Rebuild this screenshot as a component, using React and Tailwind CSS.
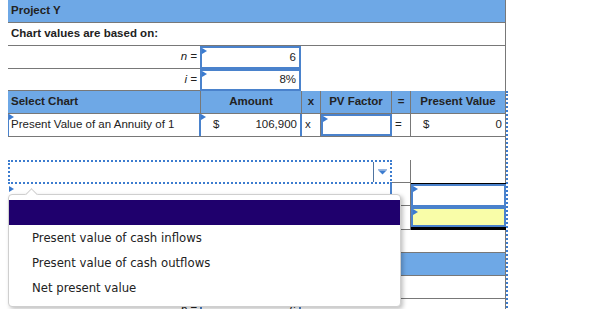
const GRID = "border-[#787878]";

function Flag({ className = "left-0 top-0" }) {
  return (
    <svg width="5" height="6" viewBox="0 0 5 6" className={`absolute ${className}`}>
      <path d="M0 0L5 3L0 6Z" fill="#3b7bd0" />
    </svg>
  );
}

function ParamRow({ label, value, h }) {
  return (
    <div className={`flex ${h}`}>
      <div className={`flex w-[192px] items-center justify-end border-b ${GRID} pr-[3px] italic`}>
        {label}
      </div>
      <div className="relative flex w-[101px] items-center justify-end border-2 border-[#4a82cc] pr-[3px]">
        <Flag />
        {value}
      </div>
      <div className={`flex-1 border-r ${GRID}`} />
    </div>
  );
}

function TopSection({ title, n, i }) {
  return (
    <div className="w-[498px]">
      <div className={`flex h-[23px] items-center border-b border-r ${GRID} bg-[#6ea8e6] pl-[3px] font-bold`}>
        {title}
      </div>
      <div className={`flex h-[23px] items-center border-b border-r ${GRID} pl-[3px] font-bold`}>
        Chart values are based on:
      </div>
      <ParamRow label="n =" value={n} h="h-[23px]" />
      <ParamRow label="i =" value={i} h="h-[22px]" />
    </div>
  );
}

function ChartTable() {
  return (
    <div className="w-[498px]">
      {/* header */}
      <div className={`flex h-[23px] border-b ${GRID} bg-[#6ea8e6] font-bold`}>
        <div className={`flex w-[193px] items-center border-r ${GRID} pl-[3px]`}>Select Chart</div>
        <div className={`flex w-[101px] items-center justify-center border-r ${GRID}`}>Amount</div>
        <div className={`flex w-[19px] items-center justify-center border-r ${GRID}`}>x</div>
        <div className={`flex w-[71px] items-center justify-center border-r ${GRID}`}>PV Factor</div>
        <div className={`flex w-[19px] items-center justify-center border-r ${GRID}`}>=</div>
        <div className={`flex w-[95px] items-center justify-center border-r ${GRID}`}>Present Value</div>
      </div>
      {/* row */}
      <div className={`flex h-[23px] border-b ${GRID}`}>
        <div className="relative flex w-[193px] items-center border-l border-r-2 border-[#4a82cc] pl-[2px]">
          <Flag />
          Present Value of an Annuity of 1
        </div>
        <div className="relative flex w-[101px] items-center justify-between border-r-2 border-[#4a82cc] pl-[12px] pr-[3px]">
          <Flag />
          <span>$</span>
          <span>106,900</span>
        </div>
        <div className={`flex w-[19px] items-center border-r ${GRID} pl-[3px]`}>x</div>
        <div className="relative w-[71px] border-2 border-[#4a82cc]">
          <Flag />
        </div>
        <div className={`flex w-[19px] items-center border-r ${GRID} pl-[3px]`}>=</div>
        <div className={`flex w-[95px] items-center justify-between border-r ${GRID} pl-[12px] pr-[3px]`}>
          <span>$</span>
          <span>0</span>
        </div>
      </div>
    </div>
  );
}

function SelectSection() {
  return (
    <div className="flex w-[498px]">
      <div className="w-[384px]">
        <div className="flex h-[24px] border-2 border-dotted border-[#3c7ccf]">
          <div className="flex-1" />
          <div className="flex w-[17px] items-center justify-center border-l border-[#4f74a0]">
            <svg width="9" height="6" viewBox="0 0 9 6">
              <rect x="0" y="0" width="9" height="1.5" fill="#9ab8e0" />
              <path d="M0.5 1.5H8.5L4.5 5.5Z" fill="#3c7ccf" />
            </svg>
          </div>
        </div>
        <div className="relative h-[46px] border-r-2 border-[#4a82cc]">
          <Flag className="left-[1px] top-[2px]" />
        </div>
      </div>
      <div className="w-[19px]">
        <div className={`h-[23px] border-b border-r ${GRID}`} />
        <div className={`h-[23px] border-b border-r ${GRID}`} />
        <div className={`h-[24px] border-b border-r ${GRID}`} />
      </div>
      <div className="w-[95px]">
        <div className={`h-[23px] border-r ${GRID}`} />
        <div className="h-[1px] bg-black" />
        <div className="relative h-[23px] border-2 border-[#4a82cc]">
          <Flag />
        </div>
        <div className="relative h-[20px] border-2 border-[#4a82cc] bg-[#f9fda8]">
          <Flag />
        </div>
        <div className="h-[3px] bg-black" />
      </div>
    </div>
  );
}

const options = [
  "Present value of cash inflows",
  "Present value of cash outflows",
  "Net present value",
];

function Popup() {
  return (
    <div className="absolute left-[8px] top-[194px] h-[113px] w-[393px] rounded-[4px] border border-[#cfcfcf] bg-white font-['DejaVu_Sans',Verdana,sans-serif] text-[11.7px] text-[#222] shadow-[2px_2px_4px_rgba(0,0,0,0.25)]">
      <div className="absolute -top-[5px] left-[18px] h-[9px] w-[9px] rotate-45 border-l border-t border-[#cfcfcf] bg-white" />
      <div className="relative mt-[5px] h-[25px] bg-[#1f006d]" />
      {options.map((t) => (
        <div key={t} className="flex h-[25px] items-center pl-[23px] pt-[2px]">
          {t}
        </div>
      ))}
    </div>
  );
}

export default function App() {
  return (
    <div className="relative h-[309px] w-[602px] overflow-hidden bg-white font-['Liberation_Sans',Arial,sans-serif] text-[11.5px] text-[#222]">
      <div className="ml-[8px] w-[500px]">
        <TopSection title="Project Y" n="6" i="8%" />
        <div className="w-[500px] border-r-2 border-dotted border-[#3c7ccf]">
          <ChartTable />
          <div className={`h-[23px] w-[498px] border-r ${GRID}`} />
          <SelectSection />
          <div className={`h-[22px] w-[498px] border-r ${GRID}`} />
          <div className={`w-[498px] border-t ${GRID}`}>
            <TopSection title="Project Z" n="6" i="8%" />
          </div>
        </div>
      </div>
      <Popup />
    </div>
  );
}
